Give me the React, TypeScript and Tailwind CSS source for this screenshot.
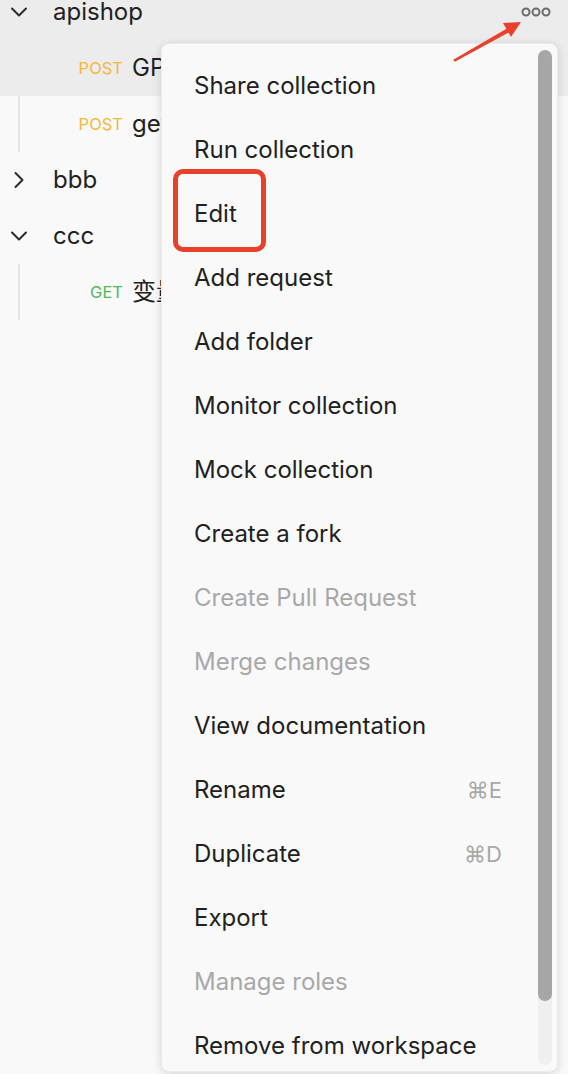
import React from "react";

const font = { fontFamily: 'Inter, "Noto Sans CJK SC", sans-serif' };

function Chevron({ open }: { open: boolean }) {
  return (
    <svg width="20" height="20" viewBox="0 0 20 20" fill="none" stroke="#2a2a2a" strokeWidth="2" strokeLinecap="round" strokeLinejoin="round">
      {open ? <path d="M3 6.5 L10 13.5 L17 6.5" /> : <path d="M6.5 3 L13.5 10 L6.5 17" />}
    </svg>
  );
}

function CollectionRow({ name, open, dots }: { name: string; open: boolean; dots?: boolean }) {
  return (
    <div className="flex items-center h-[56px] pl-[8px] pr-[16px]">
      <div className="w-[22px] flex items-center justify-center">
        <Chevron open={open} />
      </div>
      <span className="ml-[23px] text-[24px] text-[#212121]">{name}</span>
      {dots && (
        <svg className="ml-auto" width="32" height="12" viewBox="0 0 32 12" fill="none" stroke="#6b6b6b" strokeWidth="2">
          <circle cx="6" cy="6" r="3.5" />
          <circle cx="16" cy="6" r="3.5" />
          <circle cx="26" cy="6" r="3.5" />
        </svg>
      )}
    </div>
  );
}

function RequestRow({ method, name }: { method: "POST" | "GET"; name: string }) {
  return (
    <div className="flex items-center h-[56px]">
      <span
        className={`w-[105px] text-right text-[16.5px] ${method === "POST" ? "text-[#f5b73b]" : "text-[#52b85a]"}`}
      >
        {method}
      </span>
      <span className="ml-[9px] text-[24px] text-[#212121] whitespace-nowrap">{name}</span>
    </div>
  );
}

const items: { label: string; disabled?: boolean; shortcut?: string }[] = [
  { label: "Share collection" },
  { label: "Run collection" },
  { label: "Edit" },
  { label: "Add request" },
  { label: "Add folder" },
  { label: "Monitor collection" },
  { label: "Mock collection" },
  { label: "Create a fork" },
  { label: "Create Pull Request", disabled: true },
  { label: "Merge changes", disabled: true },
  { label: "View documentation" },
  { label: "Rename", shortcut: "⌘E" },
  { label: "Duplicate", shortcut: "⌘D" },
  { label: "Export" },
  { label: "Manage roles", disabled: true },
  { label: "Remove from workspace" },
];

export default function App() {
  return (
    <div className="relative w-[568px] h-[1074px] overflow-hidden bg-[#f9f9f9]" style={font}>
      {/* Tree */}
      <div className="mt-[-16px]">
        <div className="bg-[#ececec]">
          <CollectionRow name="apishop" open dots />
        </div>
        <div className="ml-[18px] border-l-2 border-[#e4e4e4]">
          <div className="bg-[#ececec] -ml-[20px] pl-[20px]">
            <div className="-ml-[2px]">
              <RequestRow method="POST" name="GPT接口" />
            </div>
          </div>
          <div className="-ml-[2px]">
            <RequestRow method="POST" name="getUser" />
          </div>
        </div>
        <CollectionRow name="bbb" open={false} />
        <CollectionRow name="ccc" open />
        <div className="ml-[18px] border-l-2 border-[#e4e4e4]">
          <div className="-ml-[2px]">
            <RequestRow method="GET" name="变量测试" />
          </div>
        </div>
      </div>

      {/* Menu */}
      <div className="absolute left-[161px] top-[43px] w-[397px] h-[1029px] rounded-[8px] bg-[#f9f9f9] border border-[#ebebeb] shadow-[0_2px_10px_rgba(0,0,0,0.14)] overflow-hidden flex">
        <div className="flex-1 pt-[10px]">
          {items.map((it) => (
            <div key={it.label} className="flex items-center h-[64px] pl-[32px] pr-[36px]">
              <span className={`text-[24px] ${it.disabled ? "text-[#a8a8a8]" : "text-[#212121]"}`}>{it.label}</span>
              {it.shortcut && <span className="ml-auto text-[22px] text-[#a8a8a8]">{it.shortcut}</span>}
            </div>
          ))}
        </div>
        <div className="w-[14px] mr-[5px] my-[6px] rounded-full bg-[#efefef] flex flex-col">
          <div className="h-[951px] rounded-full bg-[#a6a6a6]" />
        </div>
      </div>

      {/* Annotations */}
      <div className="absolute left-[173px] top-[169px] w-[93px] h-[83px] border-[5px] border-[#e8412b] rounded-[10px]" />
      <svg className="absolute left-0 top-0" width="568" height="120" viewBox="0 0 568 120">
        <path d="M454 60 L509 28 L510 31 L455 61 Z" fill="#e8412b" stroke="#e8412b" strokeWidth="1.2" strokeLinejoin="round" />
        <path d="M521 22 L503 23 L511 37 Z" fill="#e8412b" />
      </svg>
    </div>
  );
}
